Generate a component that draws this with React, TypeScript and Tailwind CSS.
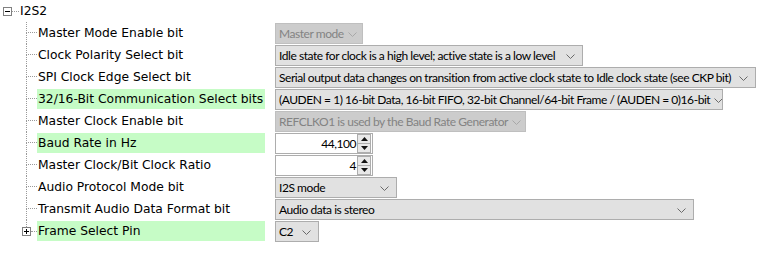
type Item = {
  label: string
  highlight?: boolean
  kind: 'combo' | 'number'
  value: string
  width: number
  disabled?: boolean
  last?: boolean
}

const items: Item[] = [
  { label: 'Master Mode Enable bit', kind: 'combo', value: 'Master mode', width: 88, disabled: true },
  { label: 'Clock Polarity Select bit', kind: 'combo', value: 'Idle state for clock is a high level; active state is a low level', width: 308 },
  { label: 'SPI Clock Edge Select bit', kind: 'combo', value: 'Serial output data changes on transition from active clock state to Idle clock state (see CKP bit)', width: 481 },
  { label: '32/16-Bit Communication Select bits', highlight: true, kind: 'combo', value: '(AUDEN = 1) 16-bit Data, 16-bit FIFO, 32-bit Channel/64-bit Frame / (AUDEN = 0)16-bit', width: 448 },
  { label: 'Master Clock Enable bit', kind: 'combo', value: 'REFCLKO1 is used by the Baud Rate Generator', width: 251, disabled: true },
  { label: 'Baud Rate in Hz', highlight: true, kind: 'number', value: '44,100', width: 98 },
  { label: 'Master Clock/Bit Clock Ratio', kind: 'number', value: '4', width: 98 },
  { label: 'Audio Protocol Mode bit', kind: 'combo', value: 'I2S mode', width: 122 },
  { label: 'Transmit Audio Data Format bit', kind: 'combo', value: 'Audio data is stereo', width: 419 },
  { label: 'Frame Select Pin', highlight: true, kind: 'combo', value: 'C2', width: 44, last: true },
]

function Chevron({ disabled }: { disabled?: boolean }) {
  return (
    <svg width="9" height="5" viewBox="0 0 9 5" className="shrink-0 mt-[2px]">
      <path d="M0.5 0.5 L4.5 4.5 L8.5 0.5" fill="none" stroke={disabled ? '#a8a8a8' : '#6a6a6a'} strokeWidth="1" />
    </svg>
  )
}

function Combo({ item }: { item: Item }) {
  return (
    <div
      style={{ width: item.width }}
      className={
        item.disabled
          ? 'h-[21px] flex items-center justify-between gap-1 pl-[3px] pr-[7px] border border-[#bfbfbf] bg-[#cccccc] text-[#838383] whitespace-nowrap overflow-hidden'
          : 'h-[21px] flex items-center justify-between gap-1 pl-[3px] pr-[7px] border border-[#adadad] bg-[#e1e1e1] text-black whitespace-nowrap overflow-hidden'
      }
    >
      <span>{item.value}</span>
      <Chevron disabled={item.disabled} />
    </div>
  )
}

function NumberBox({ item }: { item: Item }) {
  return (
    <div
      style={{ width: item.width }}
      className="h-[21px] flex items-center border border-[#adadad] bg-white"
    >
      <span className="flex-1 text-right pr-[1px]">{item.value}</span>
      <div className="w-[14px] h-[19px] flex flex-col border border-[#adadad] bg-[#e8e8e8] mr-[1px]">
        <div className="flex-1 flex items-center justify-center border-b border-[#adadad]">
          <svg width="7" height="4" viewBox="0 0 7 4"><path d="M3.5 0 L7 4 L0 4 Z" fill="#111" /></svg>
        </div>
        <div className="flex-1 flex items-center justify-center">
          <svg width="7" height="4" viewBox="0 0 7 4"><path d="M0 0 L7 0 L3.5 4 Z" fill="#111" /></svg>
        </div>
      </div>
    </div>
  )
}

function ExpandBox({ sign }: { sign: '-' | '+' }) {
  return (
    <div className="w-[9px] h-[9px] border border-[#808080] bg-white flex items-center justify-center relative shrink-0">
      <div className="w-[5px] h-px bg-black" />
      {sign === '+' && <div className="absolute w-px h-[5px] bg-black" />}
    </div>
  )
}

function Row({ item }: { item: Item }) {
  return (
    <div className="h-[22px] flex">
      <div className="w-[275px] shrink-0 flex">
        {item.last ? (
          <>
            <div className="w-[22px] shrink-0" />
            <div className="w-[9px] shrink-0 flex flex-col h-full">
              <div className="flex-1 ml-[4px] border-l border-dotted border-[#9a9a9a]" />
              <ExpandBox sign="+" />
              <div className="flex-1" />
            </div>
            <div className="w-[6px] shrink-0 flex items-center">
              <div className="w-full border-t border-dotted border-[#9a9a9a]" />
            </div>
          </>
        ) : (
          <>
            <div className="w-[26px] shrink-0" />
            <div className="w-[11px] shrink-0 flex flex-col">
              <div className="h-[11px] border-l border-b border-dotted border-[#9a9a9a]" />
              <div className="h-[11px] border-l border-dotted border-[#9a9a9a]" />
            </div>
          </>
        )}
        <div
          className={
            item.highlight
              ? 'w-[228px] h-[20px] mt-px flex items-center pl-px bg-[#c6fcc6]'
              : 'w-[228px] h-[20px] mt-px flex items-center pl-px'
          }
        >
          {item.label}
        </div>
      </div>
      <div className="flex items-start pt-px font-['Segoe_UI',Lato,sans-serif] text-[12px] tracking-[-0.45px]">
        {item.kind === 'combo' ? <Combo item={item} /> : <NumberBox item={item} />}
      </div>
    </div>
  )
}

export default function App() {
  return (
    <div className="w-[766px] h-[256px] bg-white text-black font-['DejaVu_Sans',Verdana,sans-serif] text-[12.3px] leading-none overflow-hidden">
      <div className="h-[22px] flex items-center pl-[3px]">
        <ExpandBox sign="-" />
        <div className="w-[7px] border-t border-dotted border-[#9a9a9a]" />
        <span className="ml-px">I2S2</span>
      </div>
      {items.map((item) => (
        <Row key={item.label} item={item} />
      ))}
    </div>
  )
}
